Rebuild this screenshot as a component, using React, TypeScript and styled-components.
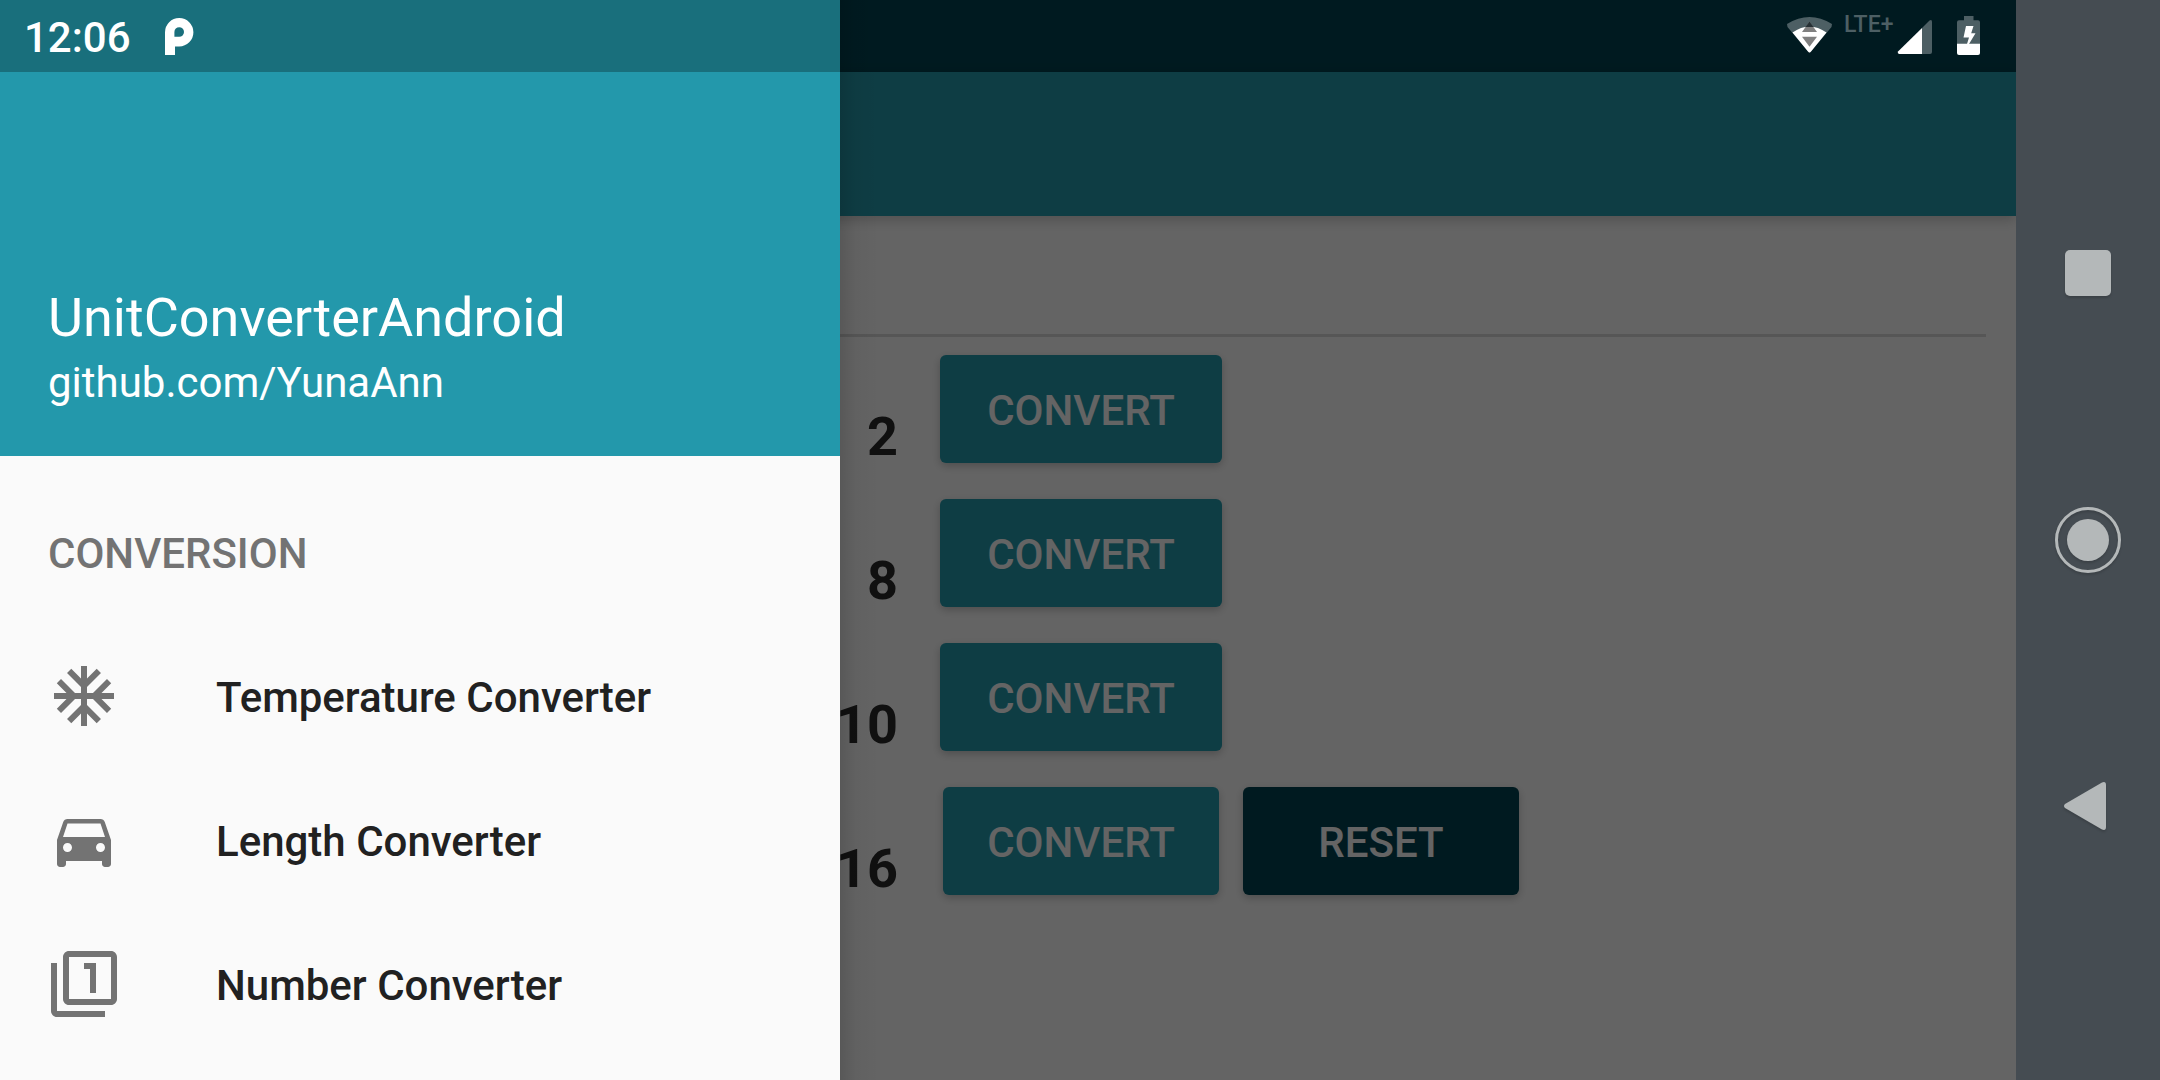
import React from "react";
import styled, { createGlobalStyle } from "styled-components";
import { MdAcUnit, MdDirectionsCar, MdFilter1 } from "react-icons/md";

const GlobalStyle = createGlobalStyle`
  *, *::before, *::after { box-sizing: border-box; }
  body { margin: 0; font-family: Roboto, "Noto Sans", sans-serif; background: #454c52; }
  button, input { font: inherit; }
  button { border: 0; padding: 0; cursor: pointer; }
`;

const teal = "#2398ab";
const deepTeal = "#004250";

const Device = styled.div`
  display: grid;
  grid-template-columns: minmax(0, 1fr) 144px;
  height: 100vh;
  overflow: hidden;
`;

const Screen = styled.div`
  position: relative;
  display: flex;
  flex-direction: column;
  overflow: hidden;
  background: #fafafa;
`;

const StatusBackdrop = styled.div`
  height: 72px;
  flex: none;
  background: ${deepTeal};
`;

const AppBar = styled.header`
  height: 144px;
  flex: none;
  background: ${teal};
  box-shadow: 0 4px 12px rgba(0, 0, 0, 0.2);
`;

const Page = styled.main`
  display: flex;
  flex-direction: column;
  padding: 24px 30px;
`;

const NumberField = styled.input`
  height: 97px;
  width: 100%;
  border: 0;
  border-bottom: 3px solid #d8d8d8;
  background: transparent;
  font-size: 54px;
  outline: none;
`;

const BaseRow = styled.div`
  display: grid;
  grid-template-columns: 889px 282px auto;
  justify-content: start;
  justify-items: center;
  column-gap: 21px;
  height: 144px;
  padding-top: 18px;
`;

const BaseLabel = styled.span`
  justify-self: end;
  padding: 50px 21px 0 0;
  color: #282828;
  font-size: 54px;
  font-weight: 700;
  line-height: 64px;
`;

const RaisedButton = styled.button<{ $dark?: boolean; $wide?: boolean }>`
  width: ${(p) => (p.$wide ? 282 : 276)}px;
  height: 108px;
  padding-top: 4px;
  border-radius: 6px;
  background: ${(p) => (p.$dark ? deepTeal : teal)};
  color: #fafafa;
  font-size: 42px;
  font-weight: 500;
  line-height: 48px;
  box-shadow: 0 3px 8px rgba(0, 0, 0, 0.22);
`;

const Scrim = styled.div`
  position: absolute;
  inset: 0;
  background: rgba(0, 0, 0, 0.6);
`;

const Drawer = styled.aside`
  position: absolute;
  inset: 0 auto 0 0;
  width: 840px;
  overflow: hidden;
  background: #fafafa;
`;

const DrawerShadow = styled.div`
  position: absolute;
  inset: 0 auto 0 840px;
  width: 40px;
  background: linear-gradient(to right, rgba(0, 0, 0, 0.12), rgba(0, 0, 0, 0.03) 40%, transparent);
`;

const DrawerHeader = styled.div`
  display: flex;
  flex-direction: column;
  justify-content: flex-end;
  height: 456px;
  padding: 0 48px 46px;
  background: ${teal};
  color: #fff;
`;

const AppName = styled.h1`
  margin: 0;
  font-size: 54px;
  font-weight: 400;
  line-height: 76px;
`;

const RepoLink = styled.a`
  color: inherit;
  font-size: 42px;
  line-height: 54px;
  text-decoration: none;
`;

const Menu = styled.nav`
  padding-top: 24px;
`;

const MenuHeading = styled.h2`
  margin: 0;
  padding: 4px 48px 0;
  color: #737373;
  font-size: 42px;
  font-weight: 500;
  line-height: 140px;
`;

const MenuList = styled.ul`
  margin: 0;
  padding: 0;
  list-style: none;
`;

const MenuItem = styled.button`
  display: flex;
  align-items: center;
  gap: 96px;
  width: 100%;
  height: 144px;
  padding: 0 48px;
  background: transparent;
  color: #212121;
  font-size: 42px;
  font-weight: 500;
  text-align: left;
  svg { flex: none; width: 72px; height: 72px; color: #737373; }
`;

const MenuLabel = styled.span`
  padding-top: 2px;
`;

const StatusBar = styled.div`
  position: absolute;
  inset: 0 0 auto 0;
  display: flex;
  align-items: center;
  justify-content: space-between;
  height: 72px;
  padding: 0 36px 0 24px;
  color: #fff;
`;

const StatusTint = styled.div`
  position: absolute;
  inset: 0 auto auto 0;
  width: 840px;
  height: 72px;
  background: rgba(0, 0, 0, 0.27);
`;

const StatusGroup = styled.div`
  display: flex;
  align-items: center;
`;

const Clock = styled.time`
  margin-right: 34px;
  padding-top: 4px;
  font-size: 42px;
  font-weight: 500;
  line-height: 68px;
`;

const Network = styled.span`
  align-self: flex-start;
  width: 65px;
  padding-left: 12px;
  color: #4d5f64;
  font-size: 23px;
  font-weight: 500;
  line-height: 18px;
  white-space: nowrap;
`;

const BatterySlot = styled.span`
  display: flex;
  margin-left: 23px;
`;

const NavBar = styled.nav`
  display: flex;
  flex-direction: column;
  align-items: center;
  justify-content: center;
  gap: 122px;
  background: #454c52;
`;

const NavButton = styled.button`
  display: flex;
  width: 144px;
  height: 144px;
  background: transparent;
  svg { display: block; width: 144px; height: 144px; filter: drop-shadow(0 2px 1px rgba(0, 0, 0, 0.15)); }
`;

const bases = [2, 8, 10, 16];

const menu = [
  { label: "Temperature Converter", Icon: MdAcUnit },
  { label: "Length Converter", Icon: MdDirectionsCar },
  { label: "Number Converter", Icon: MdFilter1 },
];

function NotificationIcon() {
  return (
    <svg width="30" height="38" viewBox="0 0 30 38" aria-hidden="true">
      <path
        fill="#fff"
        fillRule="evenodd"
        d="M0 38V15.200A14.200 14.200 0 1 1 14.200 29.400H10V38ZM9.400 15A4.800 4.800 0 1 1 14.200 19.800H9.400Z"
      />
    </svg>
  );
}

function WifiIcon() {
  return (
    <svg width="46" height="40" viewBox="0 0 46 40" aria-hidden="true">
      <path d="M1 8Q23.500-6 46 8L45.500 11 25 35.500Q23.500 37.500 22 35.500L1.500 11Z" fill="#4d5f64" />
      <path d="M6.500 16.500Q23.500 4.500 40.500 16.500L25 35.500Q23.500 37.500 22 35.500Z" fill="#fff" />
      <path d="M16 16H31L23.500 5.500Z" fill="#808080" />
      <path d="M19.500 11H27.500L23.500 5.500Z" fill="#263034" />
      <path d="M16 20.700H31L23.500 30.700Z" fill="#808080" />
    </svg>
  );
}

function SignalIcon() {
  return (
    <svg width="36" height="40" viewBox="0 0 36 40" aria-hidden="true">
      <path d="M25 12 32.500 4.500Q35 3 35 6V36Q35 38 33 38H25Z" fill="#4d5f64" />
      <path d="M25 12V38H2Q0 37 1 35.500Z" fill="#fff" />
    </svg>
  );
}

function BatteryIcon() {
  return (
    <svg width="24" height="40" viewBox="0 0 24 40" aria-hidden="true">
      <path d="M8 0H17.500V4.300H22Q24 4.300 24 6.300V28H1V6.300Q1 4.300 3 4.300H8Z" fill="#4d5f64" />
      <path d="M1 27.700H24V37Q24 39 22 39H3Q1 39 1 37Z" fill="#fff" />
      <path d="M10 10H17.500L15.200 17.300H19.500L13 28H11L13 21.500H7.500Z" fill="#fff" />
    </svg>
  );
}

export default function App() {
  return (
    <>
      <GlobalStyle />
      <Device>
        <Screen>
          <StatusBackdrop />
          <AppBar />
          <Page>
            <NumberField aria-label="Number" />
            {bases.map((base) => (
              <BaseRow key={base}>
                <BaseLabel>{base}</BaseLabel>
                <RaisedButton $wide={base !== 16}>CONVERT</RaisedButton>
                {base === 16 && <RaisedButton $dark>RESET</RaisedButton>}
              </BaseRow>
            ))}
          </Page>
          <Scrim />
          <DrawerShadow />
          <Drawer>
            <DrawerHeader>
              <AppName>UnitConverterAndroid</AppName>
              <RepoLink href="https://github.com/YunaAnn">github.com/YunaAnn</RepoLink>
            </DrawerHeader>
            <Menu>
              <MenuHeading>CONVERSION</MenuHeading>
              <MenuList>
                {menu.map(({ label, Icon }) => (
                  <li key={label}>
                    <MenuItem>
                      <Icon />
                      <MenuLabel>{label}</MenuLabel>
                    </MenuItem>
                  </li>
                ))}
              </MenuList>
            </Menu>
          </Drawer>
          <StatusTint />
          <StatusBar>
            <StatusGroup>
              <Clock>12:06</Clock>
              <NotificationIcon />
            </StatusGroup>
            <StatusGroup>
              <WifiIcon />
              <Network>LTE+</Network>
              <SignalIcon />
              <BatterySlot>
                <BatteryIcon />
              </BatterySlot>
            </StatusGroup>
          </StatusBar>
        </Screen>
        <NavBar>
          <NavButton aria-label="Recent apps">
            <svg viewBox="0 0 144 144">
              <rect x="49" y="48" width="46" height="46" rx="5" fill="#b4b8b9" />
            </svg>
          </NavButton>
          <NavButton aria-label="Home">
            <svg viewBox="0 0 144 144">
              <circle cx="72" cy="72" r="31.500" fill="none" stroke="#b4b8b9" strokeWidth="3" />
              <circle cx="72" cy="72" r="21" fill="#b4b8b9" />
            </svg>
          </NavButton>
          <NavButton aria-label="Back">
            <svg viewBox="0 0 144 144">
              <path d="M49 70 86 48.500Q90 47 90 51V93Q90 97 86 95.500L49 74Q47 72 49 70Z" fill="#b4b8b9" />
            </svg>
          </NavButton>
        </NavBar>
      </Device>
    </>
  );
}
